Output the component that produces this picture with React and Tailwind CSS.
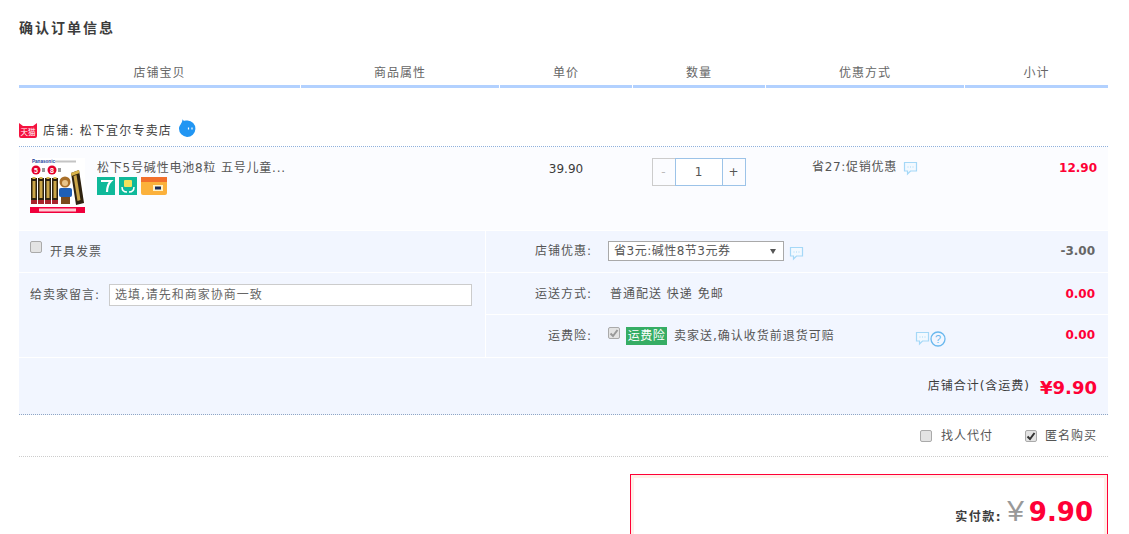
import React from "react";

const cols = [
  ["店铺宝贝", "w-[281px]"],
  ["商品属性", "w-[198px]"],
  ["单价", "w-[132px]"],
  ["数量", "w-[132px]"],
  ["优惠方式", "w-[198px]"],
  ["小计", "w-[143px]"],
];

function Bubble({ className = "" }) {
  return (
    <svg viewBox="0 0 15 15" className={"w-[15px] h-[15px] " + className}>
      <path d="M1.5 1.5h12v8.5H7.5L4.5 13V10h-3z" fill="#f2f9ff" stroke="#a5d8f7" strokeWidth="1.2" />
      <path d="M4.5 6h1M7 6h1M9.5 6h1" stroke="#a5d8f7" strokeWidth="1" />
    </svg>
  );
}

function Check({ checked, disabled, className = "" }) {
  return (
    <span className={"flex items-center justify-center w-[12px] h-[12px] rounded-[2px] border border-[#aaa] bg-[#e3e3e3] shrink-0 " + className}>
      {checked && (
        <svg viewBox="0 0 10 10" className="w-[10px] h-[10px]">
          <path d="M1.5 5.5 4 8l4.5-6" fill="none" stroke={disabled ? "#999" : "#333"} strokeWidth="2" />
        </svg>
      )}
    </span>
  );
}

function Battery({ x }) {
  return (
    <g>
      <rect x={x} y="20" width="6" height="26" fill="#2e2210" />
      <rect x={x + 1.5} y="19" width="3" height="2" fill="#d9b44a" />
      <rect x={x + 1.5} y="23" width="3" height="17" fill="#caa548" />
      <rect x={x} y="42" width="6" height="4" fill="#a8232c" />
    </g>
  );
}

function ProductImage() {
  return (
    <svg viewBox="0 0 55 55" className="w-[55px] h-[55px] shrink-0">
      <rect width="55" height="55" fill="#fff" />
      <text x="2" y="5" fontSize="4.6" fontWeight="700" fill="#1d3f9c" fontFamily="Liberation Sans">Panasonic</text>
      <rect x="25" y="2.5" width="21" height="2" fill="#c4c4c4" />
      <circle cx="6" cy="12" r="4.5" fill="#e4002b" />
      <circle cx="22" cy="12" r="4.5" fill="#e4002b" />
      <text x="6" y="14.5" fontSize="7" fontWeight="700" fill="#fff" textAnchor="middle" fontFamily="Liberation Sans">5</text>
      <text x="22" y="14.5" fontSize="7" fontWeight="700" fill="#fff" textAnchor="middle" fontFamily="Liberation Sans">8</text>
      <rect x="12" y="10" width="3" height="4" fill="#999" />
      <rect x="28" y="10" width="3" height="4" fill="#999" />
      <Battery x={1} />
      <Battery x={8} />
      <Battery x={15} />
      <Battery x={22} />
      <circle cx="35" cy="24" r="5.5" fill="#a9702a" />
      <circle cx="35" cy="25" r="3" fill="#e8c48a" />
      <rect x="29" y="30" width="13" height="9" rx="2" fill="#1f5fb5" />
      <rect x="31" y="39" width="9" height="7" fill="#7a4a1c" />
      <path d="M41 15l8-3 5 33-8 2z" fill="#2e2210" />
      <path d="M43.5 18l3-1 4 25-3 1z" fill="#caa548" />
      <path d="M41 15l8-3 .6 3-8 3z" fill="#d9b44a" />
      <rect y="49" width="55" height="6" fill="#f0003c" />
      <rect x="9" y="50.5" width="37" height="3" fill="#ffc9d2" />
    </svg>
  );
}

export default function App() {
  return (
    <div className="h-[534px] w-[1129px] overflow-hidden bg-white px-[19px] text-[12px] text-[#555] font-['DejaVu_Sans','Noto_Sans_CJK_SC',sans-serif]">
      <div className="w-[1089px]">
        <h1 className="pt-[19px] h-[53px] text-[14px] leading-[19px] font-bold tracking-[2px] text-[#3c3c3c]">确认订单信息</h1>

        <div className="flex gap-px h-[35px]">
          {cols.map(([t, w]) => (
            <div key={t} className={w + " flex flex-col justify-end items-center text-[#666] tracking-[1px] leading-[16px] border-b-[3px] border-[#b2d1ff] pb-[4px]"}>
              {t}
            </div>
          ))}
        </div>

        <div className="flex items-center h-[59px] pt-[27px] border-b border-dotted border-[#8fb0dc]">
          <svg viewBox="0 0 18 15" className="w-[18px] h-[15px] mt-[-1px]">
            <path d="M0 0l4 3h10l4-3v13a2 2 0 0 1-2 2H2a2 2 0 0 1-2-2z" fill="#f5123f" />
            <text x="9" y="11.5" fontSize="7.5" fill="#fff" textAnchor="middle" fontFamily="Noto Sans CJK SC">天猫</text>
          </svg>
          <span className="ml-[6px] tracking-[1.2px] text-[#3c3c3c]">店铺: 松下宜尔专卖店</span>
          <svg viewBox="0 0 18 18" className="w-[18px] h-[18px] ml-[6px] mb-[6px]">
            <path d="M4.5 0C5 2.5 7 1.5 9.5 1.5A8.2 8.2 0 1 1 1 9.5C1 6 4.5 4.5 4.5 0z" fill="#2196f3" />
            <path d="M10.5 8.5v2M14 8.5v2" stroke="#fff" strokeWidth="1.2" />
          </svg>
        </div>

        <div className="flex h-[83px] bg-[#fbfcff]">
          <div className="w-[481px] flex pl-[11px] pt-[11px]">
            <ProductImage />
            <div className="ml-[12px]">
              <div className="leading-[18px] mt-[1px] tracking-[0.8px] text-[#555]">松下5号碱性电池8粒 五号儿童...</div>
              <div className="flex gap-[4px]">
                <svg viewBox="0 0 18 18" className="w-[18px] h-[18px]">
                  <rect width="18" height="18" fill="#0fb99a" />
                  <path d="M4 4h10c-3 3-4 7-4 11" fill="none" stroke="#fff" strokeWidth="2.2" />
                </svg>
                <svg viewBox="0 0 18 18" className="w-[18px] h-[18px]">
                  <rect width="18" height="18" fill="#0fb99a" />
                  <rect x="5" y="3" width="8" height="7" rx="1" fill="#f5e15b" />
                  <path d="M3 10c0 4 2 5 5 5M15 10c0 4-2 5-5 5" fill="none" stroke="#fff" strokeWidth="1.5" />
                </svg>
                <svg viewBox="0 0 26 18" className="w-[26px] h-[18px]">
                  <rect width="26" height="18" rx="2" fill="#fbb13c" />
                  <rect width="26" height="5" fill="#f2702c" />
                  <rect x="12" y="8" width="10" height="6" fill="#fff2c8" />
                  <rect x="14" y="9.5" width="6" height="3" fill="#1a2a5a" />
                </svg>
              </div>
            </div>
          </div>
          <div className="w-[132px] text-center pt-[14px] leading-[16px] text-[#3c3c3c]">39.90</div>
          <div className="w-[132px] pt-[11px] flex justify-center">
            <div className="flex h-[28px] ml-[1px]">
              <div className="w-[24px] flex items-center justify-center border border-[#ccc] text-[#bbb]">-</div>
              <div className="w-[48px] -ml-px flex items-center justify-center bg-white border border-[#9cc3e8] text-[#555]">1</div>
              <div className="w-[24px] -ml-px flex items-center justify-center border border-[#9cc3e8] text-[#555]">+</div>
            </div>
          </div>
          <div className="w-[198px] pt-[12px] pl-[48px] flex items-start">
            <span className="leading-[17px] tracking-[0.7px]">省27:促销优惠</span>
            <Bubble className="ml-[6px] mt-[2px]" />
          </div>
          <div className="flex-1 text-right pr-[11px] pt-[13px] leading-[16px] font-bold text-[#ff0036]">12.90</div>
        </div>

        <div className="flex bg-[#f2f6ff] h-[127px] border-t border-white">
          <div className="w-[467px] border-r border-white">
            <div className="h-[42px] border-b border-white flex pl-[11px] pt-[10px]">
              <Check />
              <span className="ml-[8px] mt-[3px] leading-[16px] tracking-[1px]">开具发票</span>
            </div>
            <div className="flex pl-[11px] pt-[11px]">
              <span className="w-[79px] leading-[22px] tracking-[1px]">给卖家留言:</span>
              <div className="w-[363px] h-[22px] border border-[#ccc] bg-white pl-[5px] leading-[20px] tracking-[1px] text-[#666]">选填,请先和商家协商一致</div>
            </div>
          </div>
          <div className="flex-1 text-[#555]">
            <div className="h-[42px] border-b border-white flex items-center pl-px">
              <span className="w-[105px] text-right tracking-[1px] mb-[1px]">店铺优惠:</span>
              <div className="ml-[16px] mb-[1px] w-[176px] h-[20px] border border-[#a9a9a9] bg-white flex items-center justify-between pl-[5px] pr-[7px] leading-[18px]">
                <span className="whitespace-nowrap tracking-[0.5px]">省3元:碱性8节3元券</span>
                <span className="w-0 h-0 border-x-[3px] border-x-transparent border-t-[5px] border-t-[#555]" />
              </div>
              <Bubble className="ml-[5px] mt-[3px]" />
              <span className="ml-auto pr-[13px] mb-[2px] font-bold text-[#666]">-3.00</span>
            </div>
            <div className="h-[42px] border-b border-white flex items-center pl-px">
              <span className="w-[105px] text-right tracking-[1px]">运送方式:</span>
              <span className="ml-[18px] tracking-[1px]">普通配送 快递 免邮</span>
              <span className="ml-auto pr-[13px] font-bold text-[#ff0036]">0.00</span>
            </div>
            <div className="h-[42px] flex items-center pl-px">
              <span className="w-[105px] text-right tracking-[1px]">运费险:</span>
              <Check checked disabled className="ml-[16px] mb-[6px]" />
              <span className="ml-[6px] w-[41px] text-center bg-[#36ad64] text-white leading-[18px] h-[18px] tracking-[0.5px]">运费险</span>
              <span className="ml-[7px] tracking-[1px]">卖家送,确认收货前退货可赔</span>
              <Bubble className="ml-[80px] mt-[4px]" />
              <svg viewBox="0 0 16 16" className="w-[16px] h-[16px] mt-[5px]">
                <circle cx="8" cy="8" r="7" fill="none" stroke="#6ab8ee" strokeWidth="1.3" />
                <text x="8" y="12" fontSize="11" fill="#6ab8ee" textAnchor="middle" fontFamily="Liberation Sans">?</text>
              </svg>
              <span className="ml-auto pr-[13px] mb-[2px] font-bold text-[#ff0036]">0.00</span>
            </div>
          </div>
        </div>

        <div className="h-[58px] bg-[#f2f6ff] border-t border-white border-b border-b-[#8fa6c4] border-dotted [border-top-style:solid] flex items-center justify-end pr-[11px]">
          <span className="text-[#3c3c3c] tracking-[1px]">店铺合计(含运费)</span>
          <span className="ml-[10px] mt-[2px] text-[18px] font-bold text-[#ff0036]">¥9.90</span>
        </div>

        <div className="h-[42px] border-b border-dotted border-[#ccc] flex items-center justify-end pr-[11px]">
          <Check />
          <span className="ml-[9px] tracking-[1px]">找人代付</span>
          <Check checked className="ml-[32px]" />
          <span className="ml-[8px] tracking-[1px]">匿名购买</span>
        </div>

        <div className="mt-[17px] ml-[611px] h-[100px] border border-[#ff0036]">
          <div className="h-full border-[3px] border-[#fff0e8] flex items-start justify-end pr-[11px] pt-[13px]">
            <span className="mt-[17px] font-bold text-[#3c3c3c] tracking-[1.5px]">实付款:</span>
            <span className="ml-[5px] text-[30px] leading-[40px] text-[#999] font-['Liberation_Sans',sans-serif]">¥</span>
            <span className="ml-[5px] mt-[1px] text-[26px] leading-[40px] font-bold text-[#ff0036]">9.90</span>
          </div>
        </div>
      </div>
    </div>
  );
}
